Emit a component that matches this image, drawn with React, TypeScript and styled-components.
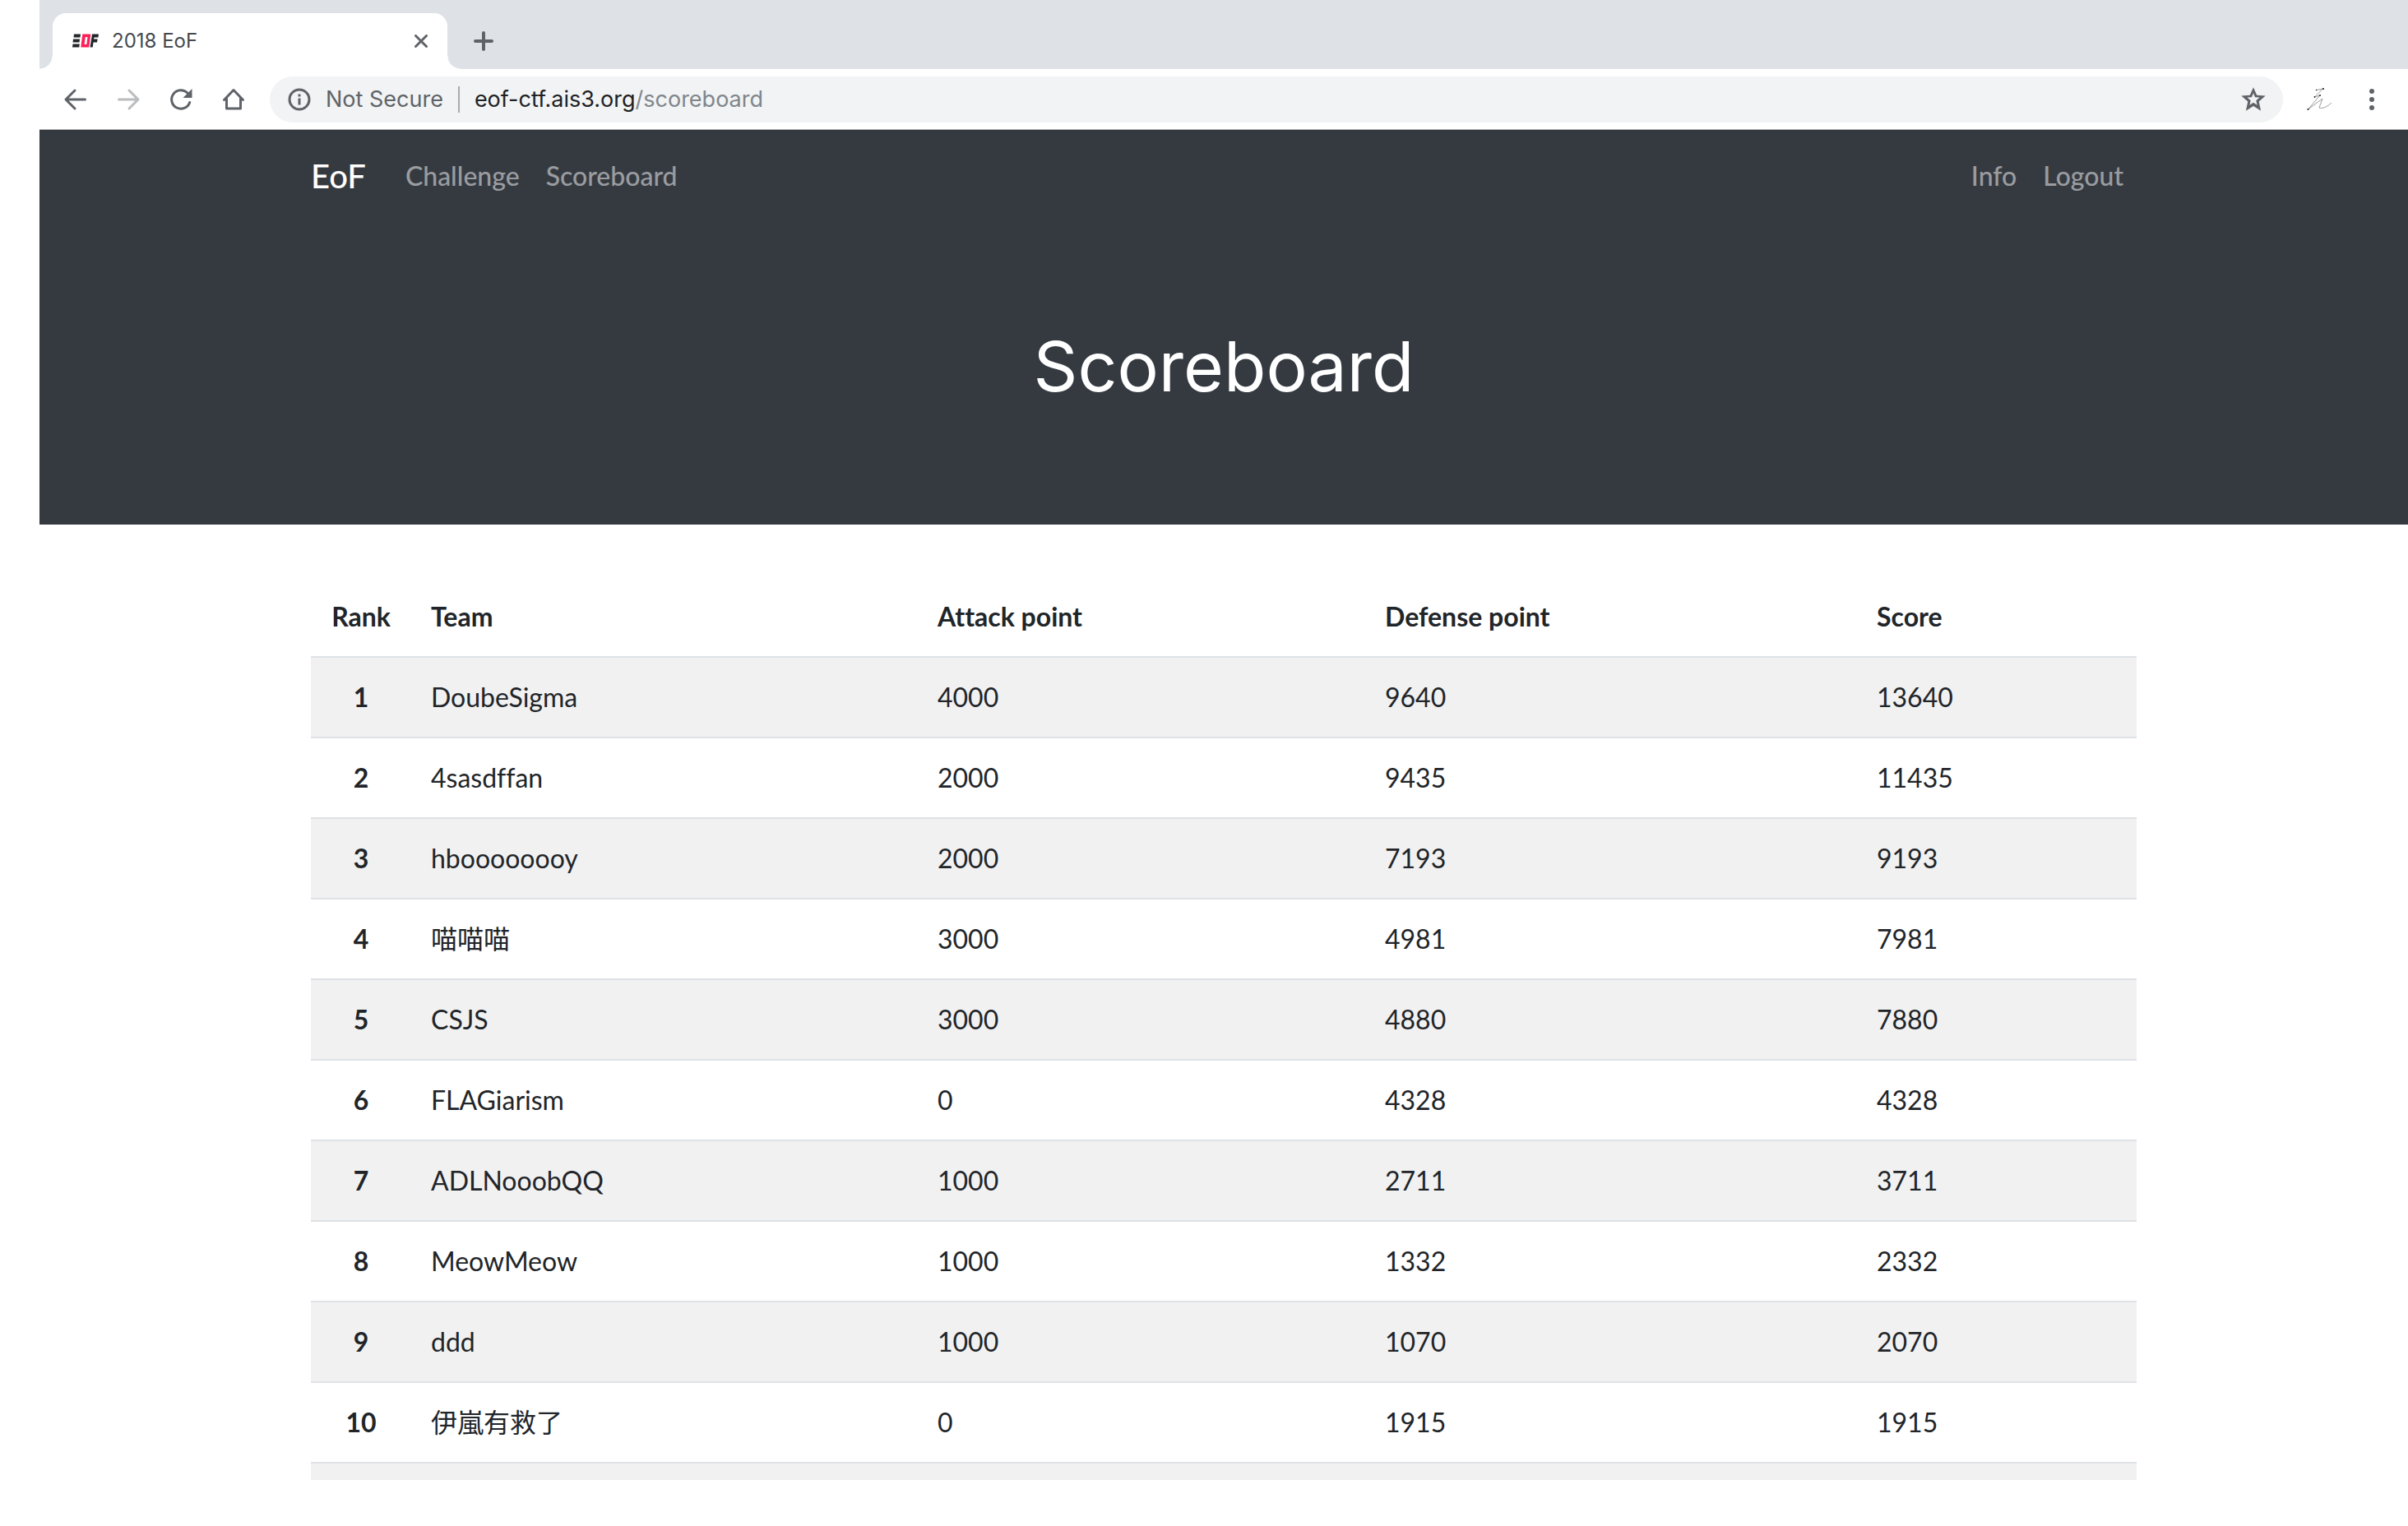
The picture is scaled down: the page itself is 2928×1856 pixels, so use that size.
import React from 'react';
import styled, { createGlobalStyle } from 'styled-components';

const Global = createGlobalStyle`
  *, *::before, *::after { box-sizing: border-box; }
  body { margin: 0; background: #fff; }
  button { border: 0; padding: 0; background: none; cursor: pointer; }
  a { text-decoration: none; }
`;

const uiFont = `Inter, Roboto, sans-serif`;
const pageFont = `Lato, 'Noto Sans CJK TC', sans-serif`;

const Window = styled.div`
  display: flex;
  flex-direction: column;
  height: 100vh;
  padding: 0 0 56px 48px;
  overflow: hidden;
`;

const TabStrip = styled.div`
  display: flex;
  flex: none;
  align-items: flex-end;
  height: 84px;
  padding-left: 16px;
  background: #dee1e6;
`;

const Tab = styled.div`
  position: relative;
  display: flex;
  align-items: center;
  width: 480px;
  height: 68px;
  padding: 0 24px;
  border-radius: 16px 16px 0 0;
  background: #fff;
  font: 400 24px/32px ${uiFont};
  color: #45494d;

  &::before,
  &::after {
    content: '';
    position: absolute;
    bottom: 0;
    width: 16px;
    height: 16px;
  }
  &::before {
    right: 100%;
    background: radial-gradient(circle at 0 0, #dee1e6 15px, #fff 16px);
  }
  &::after {
    left: 100%;
    background: radial-gradient(circle at 100% 0, #dee1e6 15px, #fff 16px);
  }
`;

const TabTitle = styled.span`
  flex: 1;
  margin-left: 16px;
`;

const IconButton = styled.button<{ $size: number }>`
  display: flex;
  flex: none;
  align-items: center;
  justify-content: center;
  width: ${(p) => p.$size}px;
  height: ${(p) => p.$size}px;
`;

const NewTab = styled(IconButton)`
  margin: 0 0 18px 28px;
`;

const Toolbar = styled.div`
  display: flex;
  flex: none;
  align-items: center;
  gap: 32px;
  height: 74px;
  padding: 0 28px;
  border-bottom: 1px solid #b6b4b6;
  background: #fff;
`;

const Omnibox = styled.div`
  display: flex;
  flex: 1;
  align-items: center;
  height: 56px;
  margin: 0 -4px;
  padding: 0 20px;
  border-radius: 28px;
  background: #f1f3f4;
  font: 400 27px/40px ${uiFont};
`;

const Security = styled.button`
  display: flex;
  align-items: center;
  gap: 16px;
  padding-right: 18px;
  font: inherit;
  color: #5f6368;
`;

const Address = styled.div`
  flex: 1;
  padding-left: 18px;
  color: #202124;
  outline: 0;
`;

const AddressRow = styled.div`
  display: flex;
  flex: 1;
  align-items: center;
`;

const Separator = styled.span`
  width: 2px;
  height: 32px;
  background: #a9acb0;
`;

const Path = styled.span`
  color: #80868b;
`;

const Page = styled.div`
  flex: 1;
  min-height: 0;
  overflow: hidden;
  font: 400 32px/48px ${pageFont};
  font-variant-ligatures: none;
  color: #212529;
`;

const Header = styled.header`
  background: #353a41;
`;

const Container = styled.div`
  max-width: 2220px;
  margin: 0 auto;
`;

const Nav = styled.nav`
  display: flex;
  align-items: center;
  padding: 16px 0;
`;

const Brand = styled.a`
  padding: 10px 0;
  margin-right: 32px;
  font-size: 40px;
  font-weight: 500;
  line-height: 60px;
  color: #fff;
`;

const NavList = styled.div<{ $end?: boolean }>`
  display: flex;
  margin-left: ${(p) => (p.$end ? 'auto' : 0)};
`;

const NavLink = styled.a`
  padding: 16px;
  font-weight: 500;
  color: rgba(255, 255, 255, 0.5);
`;

const Title = styled.h1`
  margin: 0;
  padding: 128px 0 144px;
  font: 400 84px/96px Inter, ${pageFont};
  text-align: center;
  color: #fff;
`;

const Main = styled.main`
  padding-top: 64px;
`;

const Table = styled.table`
  width: 100%;
  table-layout: fixed;
  border-spacing: 0;
`;

const Col = styled.col<{ $width: number }>`
  width: ${(p) => p.$width}px;
`;

const Row = styled.tr`
  &:nth-child(odd) { background: #f1f1f1; }
`;

const HeadCell = styled.th<{ $center?: boolean }>`
  padding: 24px;
  font-weight: 700;
  text-align: ${(p) => (p.$center ? 'center' : 'left')};
`;

const RankCell = styled.th`
  height: 98px;
  padding: 24px;
  border-top: 2px solid #dee2e6;
  font-weight: 700;
  text-align: center;
`;

const Cell = styled.td`
  height: 98px;
  padding: 24px;
  border-top: 2px solid #dee2e6;
`;

const Ico = styled.svg`
  display: block;
  flex: none;
`;

const grey = '#5f6368';

const Favicon = () => (
  <Ico width="32" height="32" viewBox="0 0 32 32" aria-hidden="true">
    <g fill="#22272b">
      <path d="M2 7.500h8l-.5 4h-8zM1 13.500h8l-.5 4h-8zM.5 19.500h8.300l-.5 4H0z" />
      <path d="M24 7.500h8l-.6 4h-5l-.3 2h4.500l-.6 4h-4.500l-.8 6H21.500z" />
    </g>
    <path d="M12.300 7.500h10l-2 16h-10zM15.800 11l-1.200 9h2.700l1.200-9z" fill="#ff1f5a" fillRule="evenodd" />
  </Ico>
);

const Arrow = ({ right }: { right?: boolean }) => (
  <Ico width="32" height="32" viewBox="0 0 32 32" fill="none" stroke={right ? '#babcbe' : grey} strokeWidth="3" strokeLinecap="round" strokeLinejoin="round">
    <path d={right ? 'M4.500 16h23M17 5l11 11-11 11' : 'M27.500 16h-23M15 5L4 16l11 11'} />
  </Ico>
);

const Reload = () => (
  <Ico width="32" height="32" viewBox="0 0 32 32">
    <path d="M26.700 19.500A11.300 11.300 0 1 1 24 8" fill="none" stroke={grey} strokeWidth="3" strokeLinecap="round" />
    <path d="M29.500 3v11H18.500z" fill={grey} />
  </Ico>
);

const Home = () => (
  <Ico width="32" height="32" viewBox="0 0 32 32" fill="none" stroke={grey} strokeWidth="3" strokeLinejoin="round" strokeLinecap="round">
    <path d="M4.500 16.500L16 4.500l11.500 12M7.500 14v13h17V14" />
  </Ico>
);

const Info = () => (
  <Ico width="32" height="32" viewBox="0 0 32 32">
    <circle cx="16" cy="16" r="12" fill="none" stroke={grey} strokeWidth="3" />
    <path d="M14.500 9.500h3v3h-3zM14.500 14.500h3v8h-3z" fill={grey} />
  </Ico>
);

const Star = () => (
  <Ico width="32" height="32" viewBox="0 0 32 32">
    <path d="M16 1.200l4.200 9.600 10.500.8-8 6.900 2.400 11.300L16 23.900l-9.100 5.900 2.400-11.300-8-6.900 10.500-.8zM16 8.200l-2 5-5.500.4 4.200 3.600-1.300 5.600L16 19.800l4.600 3-1.300-5.600 4.200-3.600-5.500-.4z" fill={grey} fillRule="evenodd" />
  </Ico>
);

const Scribble = () => (
  <Ico width="32" height="32" viewBox="0 0 32 32" fill="none">
    <path d="M12.500 4.500l8-1.500L10.500 13l6.500-2L2.500 28l17.500-13-4 11c4 2 11-2 15-6" stroke="#9a9a9a" strokeWidth="1" />
    <g fill="#222"><circle cx="21" cy="3" r="1.100" /><circle cx="12.500" cy="4.500" r=".8" /><circle cx="17" cy="11" r="1" /><circle cx="2.500" cy="28" r="1.100" /><circle cx="10.500" cy="13" r=".9" /></g>
  </Ico>
);

const Dots = () => (
  <Ico width="32" height="32" viewBox="0 0 32 32" fill={grey}>
    <circle cx="16" cy="6" r="3" /><circle cx="16" cy="16" r="3" /><circle cx="16" cy="26" r="3" />
  </Ico>
);

const teams: [string, number, number, number][] = [
  ['DoubeSigma', 4000, 9640, 13640],
  ['4sasdffan', 2000, 9435, 11435],
  ['hboooooooy', 2000, 7193, 9193],
  ['喵喵喵', 3000, 4981, 7981],
  ['CSJS', 3000, 4880, 7880],
  ['FLAGiarism', 0, 4328, 4328],
  ['ADLNooobQQ', 1000, 2711, 3711],
  ['MeowMeow', 1000, 1332, 2332],
  ['ddd', 1000, 1070, 2070],
  ['伊嵐有救了', 0, 1915, 1915],
];

export default function App() {
  return (
    <Window>
      <Global />
      <TabStrip>
        <Tab>
          <Favicon />
          <TabTitle>2018 EoF</TabTitle>
          <IconButton $size={16} aria-label="Close tab">
            <Ico width="16" height="16" viewBox="0 0 16 16" stroke={grey} strokeWidth="3" strokeLinecap="round">
              <path d="M1.500 1.500l13 13M14.500 1.500l-13 13" />
            </Ico>
          </IconButton>
        </Tab>
        <NewTab $size={32} aria-label="New tab">
          <Ico width="32" height="32" viewBox="0 0 32 32" stroke={grey} strokeWidth="4" strokeLinecap="round">
            <path d="M16 6v20M6 16h20" />
          </Ico>
        </NewTab>
      </TabStrip>
      <Toolbar>
        <IconButton $size={32} aria-label="Back"><Arrow /></IconButton>
        <IconButton $size={32} aria-label="Forward"><Arrow right /></IconButton>
        <IconButton $size={32} aria-label="Reload"><Reload /></IconButton>
        <IconButton $size={32} aria-label="Home"><Home /></IconButton>
        <Omnibox>
          <AddressRow>
            <Security><Info />Not Secure</Security>
            <Separator />
            <Address role="textbox" aria-label="Address" contentEditable suppressContentEditableWarning spellCheck={false}>
              eof-ctf.ais3.org<Path>/scoreboard</Path>
            </Address>
          </AddressRow>
          <IconButton $size={32} aria-label="Bookmark"><Star /></IconButton>
        </Omnibox>
        <IconButton $size={32} aria-label="Extension"><Scribble /></IconButton>
        <IconButton $size={32} aria-label="Menu"><Dots /></IconButton>
      </Toolbar>
      <Page>
        <Header>
          <Container>
            <Nav>
              <Brand href="#">EoF</Brand>
              <NavList>
                <NavLink href="#challenge">Challenge</NavLink>
                <NavLink href="#scoreboard">Scoreboard</NavLink>
              </NavList>
              <NavList $end>
                <NavLink href="#info">Info</NavLink>
                <NavLink href="#logout">Logout</NavLink>
              </NavList>
            </Nav>
            <Title>Scoreboard</Title>
          </Container>
        </Header>
        <Main>
          <Container>
            <Table>
              <colgroup>
                <Col $width={122} />
                <Col $width={616} />
                <Col $width={544} />
                <Col $width={598} />
                <Col $width={340} />
              </colgroup>
              <thead>
                <tr>
                  <HeadCell scope="col" $center>Rank</HeadCell>
                  <HeadCell scope="col">Team</HeadCell>
                  <HeadCell scope="col">Attack point</HeadCell>
                  <HeadCell scope="col">Defense point</HeadCell>
                  <HeadCell scope="col">Score</HeadCell>
                </tr>
              </thead>
              <tbody>
                {teams.map(([name, attack, defense, score], i) => (
                  <Row key={name}>
                    <RankCell scope="row">{i + 1}</RankCell>
                    <Cell>{name}</Cell>
                    <Cell>{attack}</Cell>
                    <Cell>{defense}</Cell>
                    <Cell>{score}</Cell>
                  </Row>
                ))}
                <Row>
                  <Cell colSpan={5} />
                </Row>
              </tbody>
            </Table>
          </Container>
        </Main>
      </Page>
    </Window>
  );
}
